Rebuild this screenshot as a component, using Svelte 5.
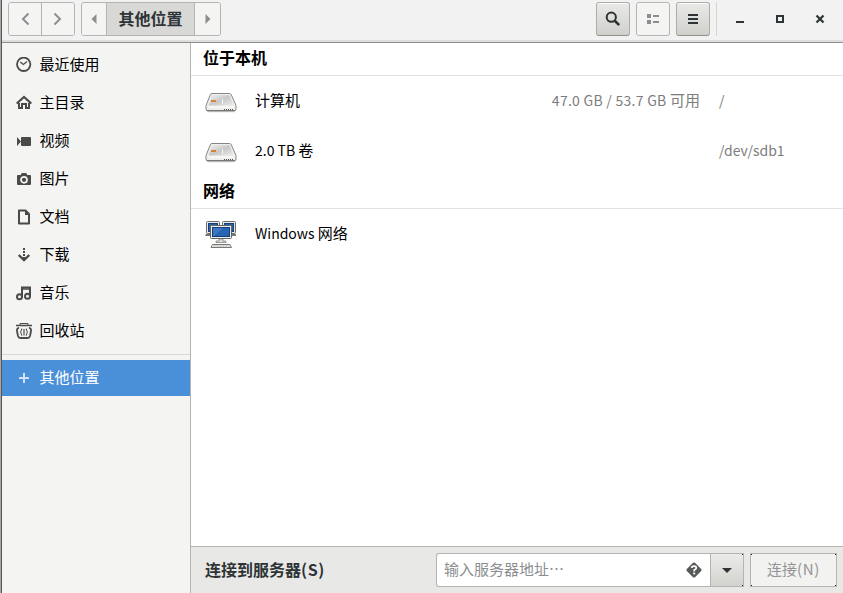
<!-- src/components/OtherLocations.svelte -->

<script>
  const places = [
    { icon: 'recent', label: '最近使用' },
    { icon: 'home', label: '主目录' },
    { icon: 'video', label: '视频' },
    { icon: 'camera', label: '图片' },
    { icon: 'document', label: '文档' },
    { icon: 'download', label: '下载' },
    { icon: 'music', label: '音乐' },
    { icon: 'trash', label: '回收站' }
  ];

  const groups = [
    {
      title: '位于本机',
      items: [
        { icon: 'drive', name: '计算机', space: '47.0 GB / 53.7 GB 可用', path: '/' },
        { icon: 'drive', name: '2.0 TB 卷', space: '', path: '/dev/sdb1' }
      ]
    },
    {
      title: '网络',
      items: [{ icon: 'network', name: 'Windows 网络', space: '', path: '' }]
    }
  ];

  let address = $state('');
  let selected = $state('other');

  // latin runs are set a little smaller than the hanzi beside them
  function runs(text) {
    return text.match(/[\x00-\x7f]+|[^\x00-\x7f]+/g) ?? [];
  }
</script>

{#snippet mixed(text)}
  {#each runs(text) as run}<span class:latin={run.charCodeAt(0) < 128}>{run}</span>{/each}
{/snippet}

{#snippet placeIcon(name)}
  <svg class="place-icon" width="16" height="16" viewBox="0 0 16 16">
    {#if name === 'recent'}
      <circle cx="7.7" cy="7.3" r="6.7" fill="none" stroke="currentColor" stroke-width="1.8" />
      <path d="M4.3 5 L7.3 7.5 L11.1 4.5" fill="none" stroke="currentColor" stroke-width="1.3" />
    {:else if name === 'home'}
      <path d="M0.7 8.5 L8 2 L15.3 8.5" fill="none" stroke="currentColor" stroke-width="2.2" />
      <path d="M3 8 V13 H6 V9 H10 V13 H13 V8" fill="none" stroke="currentColor" stroke-width="2" />
    {:else if name === 'video'}
      <path d="M6 4 H14 Q15 4 15 5 V12 Q15 13 14 13 H6 Q5 13 5 12 V5 Q5 4 6 4 Z M1 4 L5 8.5 L1 13 Z" fill="currentColor" />
    {:else if name === 'camera'}
      <path d="M5 3 L6 2 H10 L11 3 V4 H14 Q15 4 15 5 V13 Q15 14 14 14 H2 Q1 14 1 13 V5 Q1 4 2 4 H5 Z" fill="currentColor" />
      <circle cx="8" cy="8.8" r="3" fill="none" stroke="#f4f4f2" stroke-width="1.7" />
    {:else if name === 'document'}
      <path d="M3 1.5 H9.5 L13 5 V14.5 H3 Z" fill="none" stroke="currentColor" stroke-width="2" stroke-linejoin="round" />
      <path d="M9 1.5 V6 H13.5 Z" fill="currentColor" />
    {:else if name === 'download'}
      <path d="M7 1 H9 V3 H7 Z M7 4 H9 V6 H7 Z M7 7 H9 V9 H7 Z" fill="currentColor" />
      <path d="M2.7 8 L8 13 L13.3 8" fill="none" stroke="currentColor" stroke-width="2.4" />
      <path d="M7 10 H9 V13 H7 Z" fill="currentColor" />
    {:else if name === 'music'}
      <path d="M6 12 V2.5 H14 V11" fill="none" stroke="currentColor" stroke-width="2" />
      <path d="M6 4 H14" stroke="currentColor" stroke-width="1.5" />
      <circle cx="3.5" cy="11.8" r="2.5" fill="none" stroke="currentColor" stroke-width="2" />
      <circle cx="11.5" cy="11.3" r="2.5" fill="none" stroke="currentColor" stroke-width="2" />
    {:else if name === 'trash'}
      <path d="M0 2.5 H16" stroke="currentColor" stroke-width="1.5" />
      <path d="M4 2 V0.5 H12 V2" fill="none" stroke="currentColor" />
      <path d="M3 5 Q0.2 5 1.2 9 L2 13 Q2.6 15 4.5 15 H11.5 Q13.4 15 14 13 L14.8 9 Q15.8 5 13 5" fill="none" stroke="currentColor" stroke-width="1.8" />
      <path d="M5.8 5.5 Q3.6 9 5.8 12.7 M10.2 5.5 Q12.4 9 10.2 12.7" fill="none" stroke="currentColor" stroke-width="1" />
      <path d="M7.5 6 V12.5 M8.5 6 V12.5" stroke="currentColor" stroke-width="0.6" />
    {:else if name === 'add'}
      <path d="M3 7 H7 V3 H9 V7 H13 V9 H9 V13 H7 V9 H3 Z" fill="currentColor" />
    {/if}
  </svg>
{/snippet}

{#snippet monitor(x, y)}
  <g transform="translate({x} {y})">
    <rect x="0.5" y="0.5" width="13" height="12" rx="1" fill="#e8e8e4" stroke="#6b6d69" />
    <rect x="2.5" y="2.5" width="9" height="8" fill="#2c5fa8" stroke="#173f7e" />
  </g>
{/snippet}

{#snippet volumeIcon(name)}
  <svg class="volume-icon" width="34" height="32" viewBox="0 0 34 32">
    {#if name === 'drive'}
      <defs>
        <linearGradient id="drive-top" x1="0" y1="0" x2="1" y2="1">
          <stop offset="0" stop-color="#f2f2f2" />
          <stop offset="0.5" stop-color="#c8c8c8" />
          <stop offset="1" stop-color="#ededed" />
        </linearGradient>
      </defs>
      <path d="M3 26.5 H31" stroke="#00000018" stroke-width="2" />
      <path d="M8 8.5 H25.5 Q26.8 8.5 27.3 9.8 L32 20.5 V24 Q32 26 30 26 H4 Q2 26 2 24 V20.5 L6.3 9.8 Q6.7 8.5 8 8.5 Z" fill="#eeeeec" stroke="#858783" />
      <path d="M8 10 H25.5 L29.6 20.5 H4.6 Z" fill="url(#drive-top)" />
      <path d="M3.5 22 H30.5" stroke="#fff" />
      <path d="M3 25.5 H31" stroke="#777974" />
      <path d="M20 24.5 H29" stroke="#4f514e" stroke-dasharray="1 1" />
      <rect x="7" y="15" width="5" height="2" fill="#d98134" />
      <rect x="18" y="14" width="1" height="5" fill="#f5f5f5" />
    {:else}
      {@render monitor(2, 3)}
      {@render monitor(18, 3)}
      <path d="M1.5 17 H7 M27 17 H32" stroke="#777974" stroke-width="2" />
      <rect x="6.5" y="7.5" width="21" height="13" rx="1" fill="#ededeb" stroke="#62645f" />
      <rect x="8.5" y="9.5" width="17" height="9" fill="#2864b4" stroke="#123c7c" />
      <path d="M9 10 H19 L10 18 H9 Z" fill="#598bd0" opacity="0.45" />
      <path d="M15 21 H19 V23 H22 V24.5 H12 V23 H15 Z" fill="#ddd" stroke="#777974" stroke-width="0.7" />
      <path d="M8.5 26.5 H26 L27.5 29.5 H7 Z" fill="#f2f2f0" stroke="#777974" />
      <path d="M9.5 28 H25.5" stroke="#a5a7a2" stroke-dasharray="2 1" />
    {/if}
  </svg>
{/snippet}

<div class="window">
  <header class="headerbar">
    <div class="linked nav">
      <button class="flat" aria-label="后退">
        <svg width="16" height="16" viewBox="0 0 16 16"><path d="M11.5 2.5 L6 8 L11.5 13.5" fill="none" stroke="currentColor" stroke-width="2" /></svg>
      </button>
      <button class="flat" aria-label="前进">
        <svg width="16" height="16" viewBox="0 0 16 16"><path d="M4.5 2.5 L10 8 L4.5 13.5" fill="none" stroke="currentColor" stroke-width="2" /></svg>
      </button>
    </div>

    <div class="linked pathbar">
      <button class="flat arrow" aria-label="上一级">
        <svg width="6" height="10" viewBox="0 0 6 10"><path d="M5.5 0 V10 L0.5 5 Z" fill="currentColor" /></svg>
      </button>
      <button class="crumb">其他位置</button>
      <button class="flat arrow" aria-label="下一级">
        <svg width="6" height="10" viewBox="0 0 6 10"><path d="M0.5 0 V10 L5.5 5 Z" fill="currentColor" /></svg>
      </button>
    </div>

    <div class="tools">
      <button class="tool" aria-label="搜索">
        <svg width="16" height="16" viewBox="0 0 16 16">
          <circle cx="6.3" cy="6.2" r="4.6" fill="none" stroke="currentColor" stroke-width="2" />
          <path d="M9.5 9.5 L14.2 14.2" stroke="currentColor" stroke-width="2.6" />
        </svg>
      </button>
      <button class="tool disabled" aria-label="视图">
        <svg width="16" height="16" viewBox="0 0 16 16"><path d="M2 3 H6 V7 H2 Z M2 9 H6 V13 H2 Z M8 4 H14 V6 H8 Z M8 10 H14 V12 H8 Z" fill="currentColor" /></svg>
      </button>
      <button class="tool" aria-label="菜单">
        <svg width="16" height="16" viewBox="0 0 16 16"><path d="M3 3 H13 V5 H3 Z M3 7 H13 V9 H3 Z M3 11 H13 V13 H3 Z" fill="currentColor" /></svg>
      </button>
    </div>

    <div class="controls">
      <button aria-label="最小化">
        <svg width="16" height="16" viewBox="0 0 16 16"><path d="M4 10 H12 V12 H4 Z" fill="currentColor" /></svg>
      </button>
      <button aria-label="最大化">
        <svg width="16" height="16" viewBox="0 0 16 16"><rect x="5" y="5" width="6" height="6" fill="none" stroke="currentColor" stroke-width="2" /></svg>
      </button>
      <button aria-label="关闭">
        <svg width="16" height="16" viewBox="0 0 16 16"><path d="M4.5 4.5 L11.5 11.5 M11.5 4.5 L4.5 11.5" stroke="currentColor" stroke-width="2.2" /></svg>
      </button>
    </div>
  </header>

  <div class="body">
    <nav class="sidebar">
      {#each places as place}
        <button class="place" class:selected={selected === place.icon} onclick={() => selected = place.icon}>
          {@render placeIcon(place.icon)}
          <span>{place.label}</span>
        </button>
      {/each}
      <div class="separator"></div>
      <button class="place other" class:selected={selected === 'other'} onclick={() => selected = 'other'}>
        {@render placeIcon('add')}
        <span>其他位置</span>
      </button>
    </nav>

    <main class="content">
      <div class="list">
        {#each groups as group}
          <h2>{group.title}</h2>
          {#each group.items as item}
            <div class="volume">
              {@render volumeIcon(item.icon)}
              <span class="name">{@render mixed(item.name)}</span>
              <span class="space">{@render mixed(item.space)}</span>
              <span class="path">{@render mixed(item.path)}</span>
            </div>
          {/each}
        {/each}
      </div>

      <footer class="connect">
        <span class="connect-label">连接到服务器<span class="mnemonic">(S)</span></span>
        <div class="entry">
          <input bind:value={address} placeholder="输入服务器地址⋯" />
          <svg width="16" height="16" viewBox="0 0 16 16">
            <path d="M7 0.8 Q8 0 9 0.8 L15.2 7 Q16 8 15.2 9 L9 15.2 Q8 16 7 15.2 L0.8 9 Q0 8 0.8 7 Z" fill="#555a58" />
            <path d="M5.8 6 Q5.8 4.2 8 4.2 Q10.3 4.2 10.3 6 Q10.3 7.2 8.2 8 V9.5" fill="none" stroke="#fff" stroke-width="1.7" />
            <rect x="7.2" y="10.6" width="2" height="1.8" fill="#fff" />
          </svg>
        </div>
        <button class="drop" aria-label="最近的服务器">
          <svg width="10" height="5" viewBox="0 0 10 5"><path d="M0 0 H10 L5 5 Z" fill="currentColor" /></svg>
        </button>
        <button class="go">连接<span class="mnemonic">(N)</span></button>
      </footer>
    </main>
  </div>
</div>

<style>
  :global(body) {
    margin: 0;
    overflow: hidden;
  }

  .window {
    box-sizing: border-box;
    width: 843px;
    height: 593px;
    border-left: 2px ridge #a8a8a6;
    display: flex;
    flex-direction: column;
    background: #fff;
    color: #000;
    font-family: "Noto Sans CJK SC", "Noto Sans", sans-serif;
    font-size: 15px;
  }

  button {
    box-sizing: border-box;
    margin: 0;
    padding: 0;
    border: 0;
    background: none;
    color: inherit;
    font: inherit;
    display: flex;
    align-items: center;
    justify-content: center;
  }

  svg {
    display: block;
    flex: none;
  }

  .headerbar {
    box-sizing: border-box;
    height: 43px;
    flex: none;
    display: flex;
    align-items: flex-start;
    padding: 2px 0 0 6px;
    border-bottom: 1px solid #8d8f8a;
    box-shadow: inset 0 -2px #dededc;
    background: #f2f2f2;
    color: #2e3436;
  }

  .linked {
    box-sizing: border-box;
    display: flex;
    height: 34px;
    border: 1px solid #b4b5b0;
    border-radius: 3px;
    overflow: hidden;
  }

  .linked button + button {
    border-left: 1px solid #b4b5b0;
  }

  .nav {
    width: 67px;
    margin-right: 6px;
  }

  .nav button {
    flex: 1;
  }

  .pathbar {
    width: 140px;
  }

  .flat {
    color: #8b8e8f;
    background: #f4f4f3;
  }

  .arrow {
    width: 24px;
  }

  .arrow:last-child {
    width: 26px;
  }

  .crumb {
    flex: 1;
    padding: 0 0 3px;
    background: #d8d8d6;
    font-size: 16px;
    font-weight: bold;
  }

  .tools {
    display: flex;
    gap: 6px;
    margin-left: auto;
    padding-right: 6px;
  }

  .tool {
    width: 34px;
    height: 34px;
    border: 1px solid #acada8;
    border-bottom-color: #8f918c;
    border-radius: 3px;
    background: linear-gradient(#e9e9e7, #d0d0cd);
    box-shadow: inset 0 1px #fbfbfb;
  }

  .disabled {
    border-color: #b4b5b0;
    background: #f4f4f3;
    color: #8b8e8f;
  }

  .controls {
    display: flex;
    gap: 6px;
    height: 34px;
    padding: 0 6px;
    border-left: 1px solid #d5d5d3;
  }

  .controls button {
    width: 34px;
  }

  .body {
    flex: 1;
    display: flex;
    min-height: 0;
  }

  .sidebar {
    box-sizing: border-box;
    width: 189px;
    padding-top: 2px;
    border-right: 1px solid #b4b5b0;
    background: #f4f4f2;
  }

  .place {
    width: 100%;
    height: 38px;
    padding-left: 14px;
    gap: 8px;
    justify-content: flex-start;
  }

  .place span {
    padding-bottom: 2px;
    margin-left: -0.5px;
  }

  .place-icon {
    margin-top: 2px;
    color: #4a4a47;
  }

  .other .place-icon {
    margin-top: 0;
  }

  .other span {
    padding-bottom: 3px;
  }

  .separator {
    height: 1px;
    margin: 5px 0;
    background: #d8d8d6;
  }

  .other {
    height: 36px;
  }

  .selected {
    background: #4a90d9;
    color: #fff;
  }

  .selected .place-icon {
    color: #d2e3f6;
  }

  .content {
    flex: 1;
    display: flex;
    flex-direction: column;
    min-width: 0;
  }

  .list {
    flex: 1;
  }

  h2 {
    box-sizing: border-box;
    height: 33px;
    margin: 0;
    padding-left: 12px;
    border-bottom: 1px solid #e2e2e0;
    font-size: 16px;
    line-height: 29px;
  }

  .volume {
    height: 50px;
    display: grid;
    grid-template-columns: 34px 260px 202px 1fr;
    align-items: center;
    padding-left: 13px;
  }

  .volume-icon {
    margin-left: -0.5px;
  }

  .name,
  .space,
  .path {
    padding-bottom: 4px;
    white-space: nowrap;
  }

  .latin {
    font-size: 14px;
    white-space: pre;
  }

  .name {
    padding-left: 17px;
  }

  .space,
  .path {
    color: #7d7d7d;
  }

  .space {
    text-align: right;
  }

  .space .latin {
    letter-spacing: 0.27px;
  }

  .path {
    padding-left: 19px;
  }

  .connect {
    box-sizing: border-box;
    height: 47px;
    flex: none;
    display: flex;
    align-items: flex-start;
    padding: 6px 6px 0 14px;
    border-top: 1px solid #b4b5b0;
    background: #e8e8e6;
    color: #2e3436;
  }

  .connect-label {
    flex: 1;
    font-size: 16px;
    font-weight: bold;
    line-height: 32px;
  }

  .mnemonic {
    letter-spacing: 0.6px;
  }

  .entry {
    box-sizing: border-box;
    width: 274px;
    height: 34px;
    display: flex;
    align-items: center;
    padding: 0 8px 0 7px;
    border: 1px solid #b4b5b0;
    border-right: 0;
    border-radius: 3px 0 0 3px;
    background: #fff;
  }

  input {
    flex: 1;
    min-width: 0;
    padding: 0 0 3px;
    border: 0;
    outline: 0;
    font: inherit;
    background: none;
  }

  input::placeholder {
    color: #8b8e8f;
  }

  .drop,
  .go {
    height: 34px;
    border: 1px solid #b4b5b0;
    background:
      linear-gradient(#222, #222) 100% 0 / 2px 2px no-repeat border-box,
      linear-gradient(#222, #222) 100% 100% / 2px 2px no-repeat border-box,
      linear-gradient(#ebebe9, #d2d2cf);
  }

  .drop {
    width: 34px;
    margin-right: 6px;
  }

  .go {
    width: 87px;
    padding-bottom: 3px;
    color: #929595;
    background:
      linear-gradient(#222, #222) 0 0 / 2px 2px no-repeat border-box,
      linear-gradient(#222, #222) 100% 0 / 2px 2px no-repeat border-box,
      linear-gradient(#222, #222) 0 100% / 2px 2px no-repeat border-box,
      linear-gradient(#222, #222) 100% 100% / 2px 2px no-repeat border-box,
      #f2f2f1;
  }
</style>
